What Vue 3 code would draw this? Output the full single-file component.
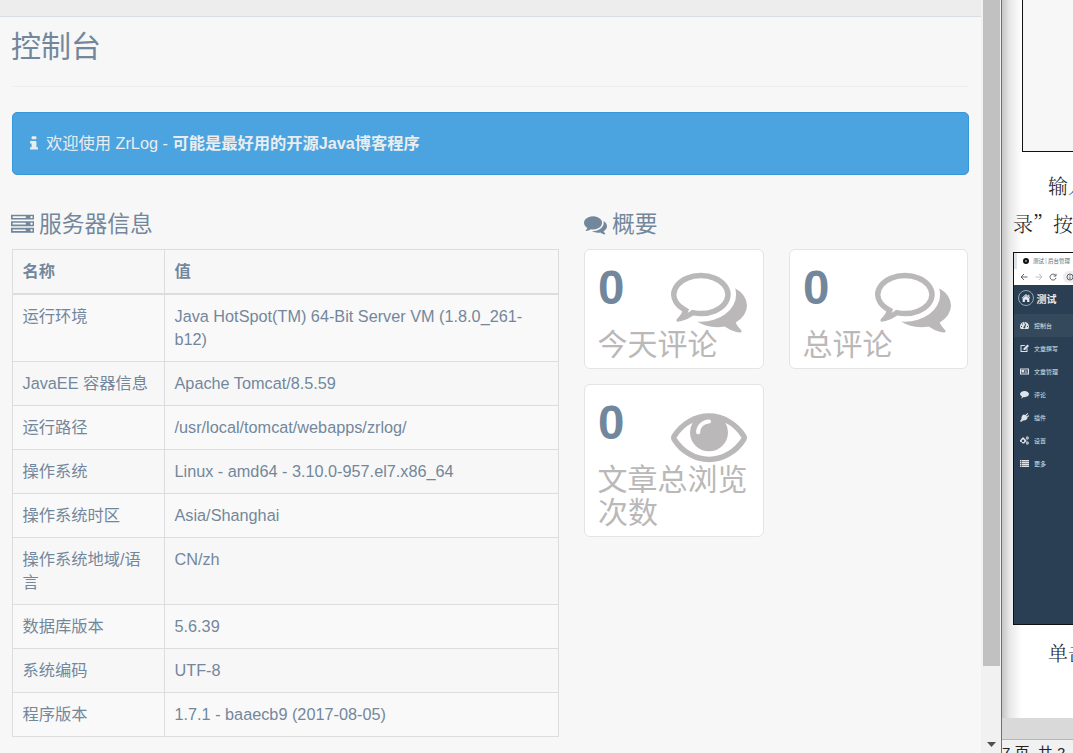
<script setup>
const server = [
	{ name: "运行环境", value: "Java HotSpot(TM) 64-Bit Server VM (1.8.0_261-b12)" },
	{ name: "JavaEE 容器信息", value: "Apache Tomcat/8.5.59" },
	{ name: "运行路径", value: "/usr/local/tomcat/webapps/zrlog/" },
	{ name: "操作系统", value: "Linux - amd64 - 3.10.0-957.el7.x86_64" },
	{ name: "操作系统时区", value: "Asia/Shanghai" },
	{ name: "操作系统地域/语言", value: "CN/zh" },
	{ name: "数据库版本", value: "5.6.39" },
	{ name: "系统编码", value: "UTF-8" },
	{ name: "程序版本", value: "1.7.1 - baaecb9 (2017-08-05)" },
];

const commentsO = "M704 384q-153 0-286 52t-211.5 141-78.5 191q0 82 53 158t149 132l97 56-35 84q34-20 62-39l44-31 53 10q78 14 153 14 153 0 286-52t211.5-141 78.5-191-78.5-191-211.5-141-286-52zm0-128q191 0 353.5 68.5t256.5 186.5 94 257-94 257-256.5 186.5-353.5 68.5q-86 0-176-16-124 88-278 128-36 9-86 16h-3q-11 0-20.5-8t-11.5-21q-1-3-1-6.5t.5-6.5 2-6l2.5-5 3.5-5.5 4-5 4.5-5 4-4.5q5-6 23-25t26-29.5 22.5-29 25-38.5 20.5-44q-124-72-195-177t-71-224q0-139 94-257t256.5-186.5 353.5-68.5zm822 1169q10 24 20.5 44t25 38.5 22.5 29 26 29.5 23 25q1 1 4 4.5t4.5 5 4 5 3.5 5.5l2.5 5 2 6 .5 6.5-1 6.5q-3 14-13 22t-22 7q-50-7-86-16-154-40-278-128-90 16-176 16-271 0-472-132 58 4 88 4 161 0 309-45t264-129q125-92 192-212t67-254q0-77-23-152 129 71 204 178t75 230q0 120-71 224.5t-195 176.5z";
const eye = "M1664 960q-152-236-381-353 61 104 61 225 0 185-131.5 316.5t-316.5 131.5-316.5-131.5-131.5-316.5q0-121 61-225-229 117-381 353 133 205 333.5 326.5t434.5 121.5 434.5-121.5 333.5-326.5zm-720-384q0-20-14-34t-34-14q-125 0-214.5 89.5t-89.5 214.5q0 20 14 34t34 14 34-14 14-34q0-86 61-147t147-61q20 0 34-14t14-34zm848 384q0 34-20 69-140 230-376.5 368.5t-499.5 138.5-499.5-139-376.5-368q-20-35-20-69t20-69q140-229 376.5-368t499.5-139 499.5 139 376.5 368q20 35 20 69z";

const tiles = [
	{ count: 0, label: "今天评论", icon: commentsO },
	{ count: 0, label: "总评论", icon: commentsO },
	{ count: 0, label: "文章总浏览次数", icon: eye },
];

// 18x18 のアイコン
const menu = [
	{ label: "控制台", icon: "M0 11a9 9 0 0 1 18 0q0 3-1.5 5h-15Q0 14 0 11zM2 10v2h2v-2zM4 5v2h2V5zM8 3v2h2V3zM14 10v2h2v-2zM11 5L8 11a2 2 0 1 0 2.500 1L12.500 6z", active: true },
	{ label: "文章撰写", icon: "M2 2h9l-2 2H3v10h10v-4l2-2v8H1V2zM15 1l3 3-8 8H7V9z" },
	{ label: "文章管理", icon: "M0 3h18v12H0zM2 5v8h14V5zM3 6h5v4H3zM9 6h3v1H9zM13 6h2v1h-2zM9 8h6v1H9zM3 11h5v1H3zM9 11h6v1H9z" },
	{ label: "评论", icon: "M9 2c5 0 9 2.700 9 6.200s-4 6.200-9 6.200l-2-.2Q5 16.500 2 17q2-2 1.800-4Q0 11 0 8.200C0 4.700 4 2 9 2z" },
	{ label: "插件", icon: "M11 4l4-4 1.500 1.500-4 4 1.500 1.500 3-3L18 6l-4 4 1 1q-3 5-9 4l-4 3-2-2 3-4Q2 6 7 3z" },
	{ label: "设置", icon: "M5 3h3l.5 2 2 .5V7l2 1v3l-2 1-1 2-2 1H5l-1-2-2-1-2-1V8l2-1 1-2zM6 7a2.500 2.500 0 1 0 .1 0zM13 1h3l2 3-2 3h-3l-1-3zM14.500 3a1 1 0 1 0 .1 0zM13 11h3l2 3-2 3h-3l-1-3zM14.500 13a1 1 0 1 0 .1 0z" },
	{ label: "更多", icon: "M0 2h3v3H0zM4 2h14v3H4zM0 6h3v3H0zM4 6h14v3H4zM0 10h3v3H0zM4 10h14v3H4zM0 14h3v2H0zM4 14h14v2H4z" },
];
</script>

<template>
	<div class="desktop">
		<div class="admin">
			<div class="top-nav"></div>
			<main class="content">
				<h3 class="page-title">控制台</h3>
				<div class="alert">
					<svg class="info-icon" viewBox="576 0 640 1792" preserveAspectRatio="none"><path d="M1216 1344v128q0 26-19 45t-45 19h-512q-26 0-45-19t-19-45v-128q0-26 19-45t45-19h64v-384h-64q-26 0-45-19t-19-45v-128q0-26 19-45t45-19h384q26 0 45 19t19 45v576h64q26 0 45 19t19 45zm-128-1152v192q0 26-19 45t-45 19h-256q-26 0-45-19t-19-45v-192q0-26 19-45t45-19h256q26 0 45 19t19 45z" /></svg>
					<div>欢迎使用 ZrLog - <strong>可能是最好用的开源Java博客程序</strong></div>
				</div>
				<div class="columns">
					<section class="server">
						<h4 class="section-title shift">
							<svg viewBox="0 0 1792 1792"><path d="M128 1408h1024v-128h-1024v128zm0-512h1024v-128h-1024v128zm1568 448q0-40-28-68t-68-28-68 28-28 68 28 68 68 28 68-28 28-68zm-1568-960h1024v-128h-1024v128zm1568 448q0-40-28-68t-68-28-68 28-28 68 28 68 68 28 68-28 28-68zm0-512q0-40-28-68t-68-28-68 28-28 68 28 68 68 28 68-28 28-68zm96 832v384h-1792v-384h1792zm0-512v384h-1792v-384h1792zm0-512v384h-1792v-384h1792z" /></svg>
							<span>服务器信息</span>
						</h4>
						<table>
							<thead>
								<tr><th class="name">名称</th><th>值</th></tr>
							</thead>
							<tbody>
								<tr v-for="row in server" :key="row.name">
									<td>{{ row.name }}</td>
									<td>{{ row.value }}</td>
								</tr>
							</tbody>
						</table>
					</section>
					<section class="summary">
						<h4 class="section-title">
							<svg viewBox="0 0 1792 1792"><path d="M1408 768q0 139-94 257t-256.500 186.500-353.500 68.500q-86 0-176-16-124 88-278 128-36 9-86 16h-3q-11 0-20.500-8t-11.500-21q-1-3-1-6.500t.5-6.500 2-6l2.500-5 3.500-5.500 4-5 4.500-5 4-4.500q5-6 23-25t26-29.500 22.500-29 25-38.500 20.500-44q-124-72-195-177t-71-224q0-139 94-257t256.500-186.500 353.500-68.500 353.500 68.500 256.500 186.500 94 257zm384 256q0 120-71 224.500t-195 176.500q10 24 20.500 44t25 38.500 22.500 29 26 29.500 23 25q1 1 4 4.500t4.500 5 4 5 3.500 5.500l2.500 5 2 6 .5 6.500-1 6.500q-3 14-13 22t-22 7q-50-7-86-16-154-40-278-128-90 16-176 16-271 0-472-132 58 4 88 4 161 0 309-45t264-129q125-92 192-212t67-254q0-77-23-152 129 71 204 178t75 230z" /></svg>
							<span>概要</span>
						</h4>
						<div class="tiles">
							<div class="tile" v-for="tile in tiles" :key="tile.label">
								<div class="tile-head">
									<div class="count">{{ tile.count }}</div>
									<svg viewBox="0 0 1792 1792"><path :d="tile.icon" /></svg>
								</div>
								<div class="label">{{ tile.label }}</div>
							</div>
						</div>
					</section>
				</div>
			</main>
		</div>
		<div class="scrollbar">
			<div class="thumb"></div>
			<div class="arrow"></div>
		</div>
		<div class="word">
			<div class="page">
				<div class="frame"></div>
				<p class="indent">输入</p>
				<p>录”按</p>
				<div class="shot">
					<div class="tab">
						<svg viewBox="0 0 6 6"><circle cx="3" cy="3" r="3" /><circle class="dot" cx="3" cy="3" r="0.8" /></svg>
						<span>测试 | 后台管理</span>
					</div>
					<div class="toolbar">
						<svg viewBox="0 0 8 8"><path d="M7.500 4H1M4 1L1 4l3 3" /></svg>
						<svg class="off" viewBox="0 0 8 8"><path d="M.5 4H7M4 1l3 3-3 3" /></svg>
						<svg viewBox="0 0 8 8"><path d="M6.500 2.300A3 3 0 1 0 7 4.800M7 .8v2.200H4.700" /></svg>
						<div class="address">
							<svg viewBox="0 0 8 8"><circle cx="4" cy="4" r="3" /><path d="M4 3.700V6M4 2v.8" /></svg>
						</div>
					</div>
					<div class="side">
						<div class="brand">
							<div class="home"><svg viewBox="0 0 18 18"><path d="M9 2l8 7-1 1-7-6-7 6-1-1zM9 5l6 5v6h-4v-4H7v4H3v-6zM13 3h2v4l-2-2z" /></svg></div>
							<span>测试</span>
						</div>
						<div class="item" v-for="item in menu" :key="item.label" :class="{active: item.active}">
							<svg viewBox="0 0 18 18"><path fill-rule="evenodd" :d="item.icon" /></svg>
							<span>{{ item.label }}</span>
						</div>
					</div>
				</div>
				<p class="indent last">单击</p>
			</div>
			<div class="page-gap"></div>
			<div class="status">7 页, 共 2</div>
		</div>
	</div>
</template>

<style>
body {
	margin: 0;
	overflow: hidden;
}
</style>

<style scoped>
.desktop {
	display: flex;
	width: 1073px;
	height: 753px;
	overflow: hidden;
	color: #73879c;
	background-color: #f7f7f7;
	font-family: "Liberation Sans", "Noto Sans CJK SC", sans-serif;
	font-size: 16.25px;
	line-height: 23px;
}
* {
	box-sizing: border-box;
}
svg {
	display: block;
	flex: none;
	fill: currentColor;
}

/* 管理画面 */
.admin {
	width: 981px;
	flex: none;
}
.top-nav {
	height: 17px;
	background-color: #ededed;
	border-bottom: 1px solid #d9dee4;
}
.content {
	padding: 0 12px;
}
.page-title {
	margin: 0 0 25px;
	height: 70px;
	padding-top: 13px;
	border-bottom: 1px solid #eee;
	font-size: 30px;
	font-weight: normal;
	line-height: 33px;
	text-indent: -1px;
}
.alert {
	display: flex;
	align-items: center;
	height: 63px;
	width: 957px;
	padding-left: 17px;
	color: #e9edef;
	background-color: #4ba3df;
	border: 1px solid #3498db;
	border-radius: 5px;
}
.info-icon {
	width: 8px;
	height: 17px;
	margin-right: 8px;
}
.columns {
	display: flex;
	gap: 25px;
	padding-top: 36px;
}
.server {
	width: 547px;
	flex: none;
}
.section-title {
	display: flex;
	align-items: center;
	gap: 5px;
	height: 27px;
	margin: 0 0 11px;
	font-size: 22.75px;
	font-weight: normal;
	line-height: 27px;
}
.section-title.shift {
	margin-left: -1px;
}
.section-title svg {
	width: 23px;
	height: 23px;
}

/* サーバー情報 */
table {
	width: 100%;
	table-layout: fixed;
	border-collapse: collapse;
}
th, td {
	padding: 10px 10px 10px 9.500px;
	border: 1px solid #ddd;
	text-align: left;
	vertical-align: top;
}
th {
	border-bottom-width: 2px;
}
.name {
	width: 152px;
}
tbody tr:nth-child(odd) {
	background-color: #f9f9f9;
}

/* 概要 */
.summary {
	width: 384px;
	flex: none;
}
.tiles {
	display: grid;
	grid-template-columns: 180px 179px;
	gap: 15px 25px;
}
.tile {
	padding: 13px 12px 7px 13px;
	background-color: #fff;
	border: 1px solid #e4e4e4;
	border-radius: 6px;
}
.tile-head {
	display: flex;
	justify-content: space-between;
	height: 65px;
	padding-right: 4px;
}
.tile-head svg {
	width: 76px;
	height: 76px;
	margin-top: -1px;
	color: #bab8b8;
}
.count {
	font-size: 47.5px;
	font-weight: bold;
	line-height: 50px;
}
.label {
	color: #bab8b8;
	font-size: 30px;
	line-height: 33px;
	text-indent: -0.5px;
}

/* スクロールバー */
.scrollbar {
	display: flex;
	flex-direction: column;
	justify-content: space-between;
	width: 21px;
	flex: none;
	padding: 0 1px 6px 2px;
	background-color: #f1f1f1;
	border-right: 1px solid #707070;
}
.thumb {
	height: 666px;
	background-color: #c1c1c1;
}
.arrow {
	width: 9px;
	height: 5px;
	margin-left: 4px;
	background-color: #505050;
	clip-path: polygon(0 0, 100% 0, 50% 100%);
}

/* 文書 */
.word {
	width: 71px;
	flex: none;
	overflow: hidden;
	color: #222;
}
.page {
	height: 718px;
	padding-left: 11px;
	background: linear-gradient(to right, #c6c6c6, #e9e9e9 8px, #fff 20px);
	white-space: nowrap;
}
.frame {
	height: 152px;
	margin-left: 9px;
	background-color: #f7f7f7;
	border: solid #111;
	border-width: 0 0 1px 1px;
}
.page p {
	margin: 0;
	padding-top: 14px;
	height: 38px;
	font-family: "Noto Serif CJK SC", "Noto Sans CJK SC", serif;
	font-size: 20px;
	font-weight: 300;
	line-height: 40px;
}
.page p.indent {
	padding-left: 35px;
}
.page p.last {
	padding-top: 8px;
}
.shot {
	height: 373px;
	margin-top: 24px;
	border: solid #111;
	border-width: 1px 0 1px 1px;
	background-color: #2a3f54;
	font-family: "Noto Sans CJK SC", sans-serif;
}
.tab {
	display: flex;
	align-items: center;
	gap: 4px;
	height: 16px;
	padding-left: 6px;
	color: #666;
	background-color: #fff;
	border-left: 3px solid #dee1e6;
	font-size: 5.5px;
}
.tab svg {
	width: 6px;
	height: 6px;
	color: #111;
}
.tab .dot {
	fill: #fff;
}
.toolbar {
	display: flex;
	align-items: center;
	gap: 6.5px;
	height: 16px;
	padding-left: 6px;
	background-color: #fff;
}
.toolbar svg {
	width: 8px;
	height: 8px;
	fill: none;
	stroke: #555;
	stroke-width: 0.9;
}
.toolbar .off {
	stroke: #bbb;
}
.address {
	width: 30px;
	flex: none;
	margin-left: -1px;
	padding: 2px 3px;
	background-color: #eceef0;
	border-radius: 6px 0 0 6px;
}
.side {
	color: #e7edf2;
	font-size: 6px;
}
.brand {
	display: flex;
	align-items: center;
	gap: 2.5px;
	height: 26px;
	margin-bottom: 3px;
	padding-left: 4px;
	font-size: 10px;
	font-weight: bold;
}
.home {
	width: 16px;
	height: 16px;
	padding: 2px;
	border: 1px solid #9aa5b0;
	border-radius: 50%;
}
.home svg {
	width: 10px;
	height: 10px;
}
.item {
	display: flex;
	align-items: center;
	gap: 5px;
	height: 23px;
	padding-left: 6px;
	color: #dde3e8;
}
.item.active {
	background-color: #35495d;
}
.item svg {
	width: 9px;
	height: 9px;
}
.page-gap {
	height: 22px;
	background-color: #d9d9d9;
	border-bottom: 1px solid #b5b5b5;
}
.status {
	height: 13px;
	padding-top: 3px;
	background-color: #f1f1f1;
	font-size: 15px;
	line-height: 20px;
	white-space: nowrap;
}
</style>
